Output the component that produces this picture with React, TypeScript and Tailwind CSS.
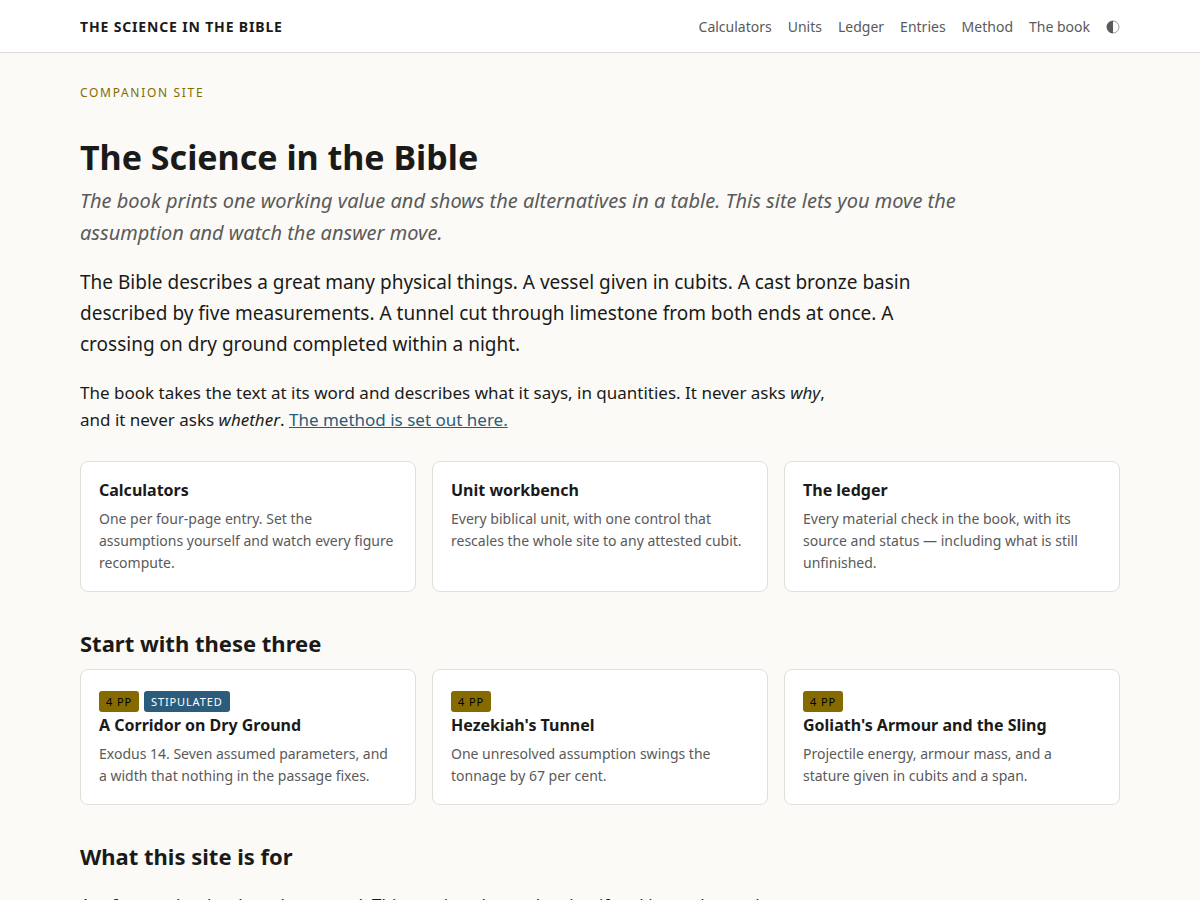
import type { ReactNode } from 'react'

const navLinks = ['Calculators', 'Units', 'Ledger', 'Entries', 'Method', 'The book']

interface CardProps {
  title: string
  children: ReactNode
  pages?: string
  status?: string
}

function Card({ title, children, pages, status }: CardProps) {
  return (
    <a href="#" className="block rounded-lg border border-[#dfe0d8] bg-white px-[18px] pt-4 pb-[17px]">
      {pages && (
        <div className="flex gap-[5px] pt-[5px] pb-px text-[11px] leading-[17px] tracking-[0.08em] uppercase">
          <span className="rounded-[3px] bg-[#856a00] px-[7px] py-[2px] text-black">{pages}</span>
          {status && <span className="rounded-[3px] bg-[#2b5c7c] px-[7px] py-[2px] text-white">{status}</span>}
        </div>
      )}
      <h3 className="text-base leading-6 font-bold">{title}</h3>
      <p className="mt-[6px] text-sm leading-[22px] text-[#5a5a5a]">{children}</p>
    </a>
  )
}

export default function App() {
  return (
    <div className="min-h-screen bg-[#fbfaf6] font-['Noto_Sans',sans-serif] text-[17px] leading-[27px] text-[#1a1a1a]">
      <header className="border-b border-[#dcdcdc] bg-white">
        <div className="mx-auto flex max-w-[1080px] items-baseline justify-between px-5 pt-4 pb-[14px] leading-[22px]">
          <a href="#" className="text-sm leading-[22px] font-bold tracking-[0.06em] uppercase">
            The Science in the Bible
          </a>
          <nav className="flex items-center gap-4 text-sm leading-[22px] text-[#5a5a5a]">
            {navLinks.map((label) => (
              <a key={label} href="#">
                {label}
              </a>
            ))}
            <button type="button" aria-label="Toggle theme">
              <svg viewBox="0 0 14 14" className="size-[14px]">
                <circle cx="7" cy="7" r="6" fill="none" stroke="currentColor" strokeWidth="0.6" />
                <path d="M7 0.7a6.3 6.3 0 0 0 0 12.6z" fill="currentColor" />
              </svg>
            </button>
          </nav>
        </div>
      </header>

      <main className="mx-auto max-w-[1080px] px-5 pt-[30px]">
        <p className="text-xs leading-5 tracking-[0.14em] text-[#856a00] uppercase">Companion site</p>
        <h1 className="mt-8 text-[34px] leading-[44px] font-bold">The Science in the Bible</h1>
        <p className="mt-[6px] max-w-[900px] text-xl leading-8 text-[#5a5a5a] italic">
          The book prints one working value and shows the alternatives in a table. This site lets you move the
          assumption and watch the answer move.
        </p>
        <p className="mt-[18px] max-w-[850px] text-[19px] leading-[31px]">
          The Bible describes a great many physical things. A vessel given in cubits. A cast bronze basin described by
          five measurements. A tunnel cut through limestone from both ends at once. A crossing on dry ground completed
          within a night.
        </p>
        <p className="mt-[19px] max-w-[760px]">
          The book takes the text at its word and describes what it says, in quantities. It never asks <em>why</em>, and
          it never asks <em>whether</em>.{' '}
          <a href="#" className="text-[#2b5c7c] underline">
            The method is set out here.
          </a>
        </p>

        <div className="mt-7 grid grid-cols-3 gap-4">
          <Card title="Calculators">
            One per four-page entry. Set the assumptions yourself and watch every figure recompute.
          </Card>
          <Card title="Unit workbench">
            Every biblical unit, with one control that rescales the whole site to any attested cubit.
          </Card>
          <Card title="The ledger">
            Every material check in the book, with its source and status — including what is still unfinished.
          </Card>
        </div>

        <h2 className="mt-[35px] text-[22px] leading-8 font-bold">Start with these three</h2>
        <div className="mt-[10px] grid grid-cols-3 gap-4">
          <Card title="A Corridor on Dry Ground" pages="4 pp" status="Stipulated">
            Exodus 14. Seven assumed parameters, and a width that nothing in the passage fixes.
          </Card>
          <Card title="Hezekiah's Tunnel" pages="4 pp">
            One unresolved assumption swings the tonnage by 67 per cent.
          </Card>
          <Card title="Goliath's Armour and the Sling" pages="4 pp">
            Projectile energy, armour mass, and a stature given in cubits and a span.
          </Card>
        </div>

        <h2 className="mt-[35px] text-[22px] leading-8 font-bold">What this site is for</h2>
        <p className="mt-[19px] max-w-[760px]">
          A reference book asks to be trusted. This one is only worth using if making a change is easy to check
          against the printed answer.
        </p>
      </main>
    </div>
  )
}
